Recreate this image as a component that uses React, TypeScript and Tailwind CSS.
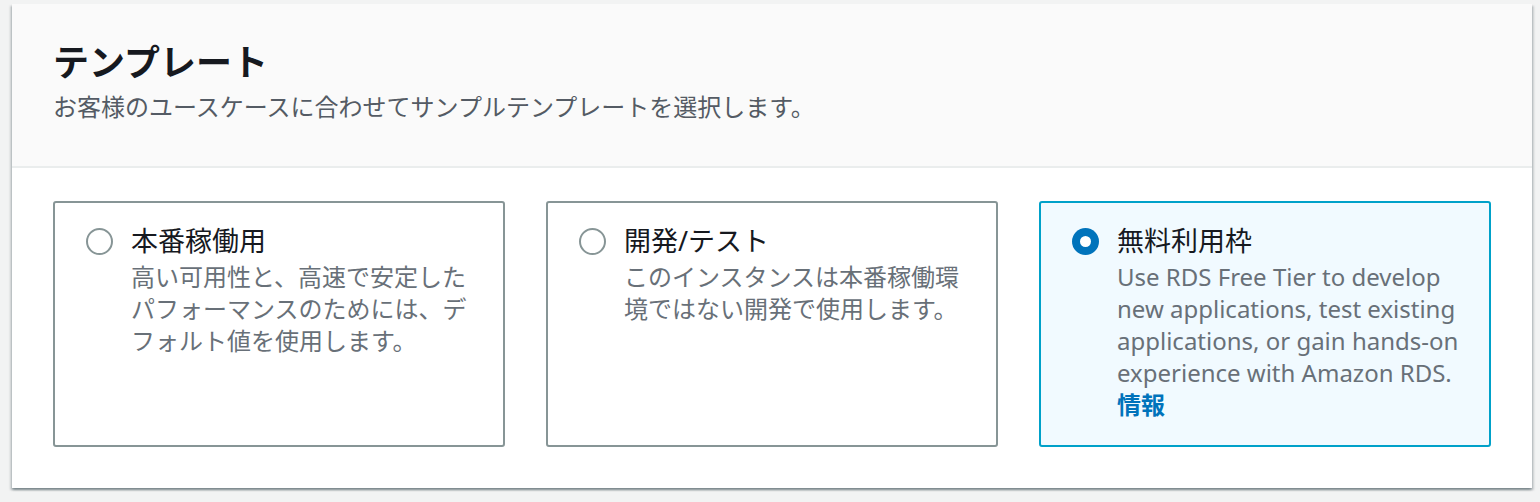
const FONT = { fontFamily: '"Noto Sans", "Noto Sans CJK JP", sans-serif' };

type Option = {
  id: string;
  label: string;
  desc: string;
  info?: boolean;
};

const OPTIONS: Option[] = [
  {
    id: "prod",
    label: "本番稼働用",
    desc: "高い可用性と、高速で安定したパフォーマンスのためには、デフォルト値を使用します。",
  },
  {
    id: "dev",
    label: "開発/テスト",
    desc: "このインスタンスは本番稼働環境ではない開発で使用します。",
  },
  {
    id: "free",
    label: "無料利用枠",
    desc: "Use RDS Free Tier to develop new applications, test existing applications, or gain hands-on experience with Amazon RDS.",
    info: true,
  },
];

function Radio({ checked }: { checked: boolean }) {
  if (checked) {
    return (
      <span className="mt-[3px] flex h-[27px] w-[27px] shrink-0 items-center justify-center rounded-full bg-[#0073bb]">
        <span className="h-[11px] w-[11px] rounded-full bg-white" />
      </span>
    );
  }
  return <span className="mt-[3px] h-[27px] w-[27px] shrink-0 rounded-full border-[2px] border-[#879596] bg-white" />;
}

export default function App() {
  const selected = "free";
  return (
    <div className="min-h-[502px] w-[1540px] bg-[#f2f3f3] pt-[4px] pl-[12px]" style={FONT}>
      <div className="w-[1520px] bg-white shadow-[0_2px_2px_0_rgba(0,28,36,0.3),2px_2px_2px_0_rgba(0,28,36,0.15),-2px_2px_2px_0_rgba(0,28,36,0.15)]">
        <div className="border-b-2 border-[#eaeded] bg-[#fafafa] px-[41px] pt-[37px] pb-[43px]">
          <h2 className="text-[36px] leading-[44px] font-bold text-[#16191f]">テンプレート</h2>
          <p className="mt-[6px] text-[24px] leading-[32px] text-[#545b64]">
            お客様のユースケースに合わせてサンプルテンプレートを選択します。
          </p>
        </div>
        <div className="grid grid-cols-3 gap-[41px] px-[41px] pt-[33px] pb-[41px]">
          {OPTIONS.map((o) => {
            const on = o.id === selected;
            return (
              <div
                key={o.id}
                className={
                  on
                    ? "flex gap-[18px] rounded-[3px] border-2 border-[#00a1c9] bg-[#f1faff] pl-[31px] pr-[24px] pt-[22px] pb-[24px]"
                    : "flex gap-[18px] rounded-[3px] border-2 border-[#879596] bg-white pl-[31px] pr-[24px] pt-[22px] pb-[24px]"
                }
              >
                <Radio checked={on} />
                <div className="min-w-0">
                  <div className="text-[27px] leading-[32px] text-[#16191f]">{o.label}</div>
                  <div className="mt-[4px] text-[24px] leading-[32px] text-[#687078]">
                    {o.desc}
                    {o.info && (
                      <div>
                        <a className="font-bold text-[#0073bb]">情報</a>
                      </div>
                    )}
                  </div>
                </div>
              </div>
            );
          })}
        </div>
      </div>
    </div>
  );
}
